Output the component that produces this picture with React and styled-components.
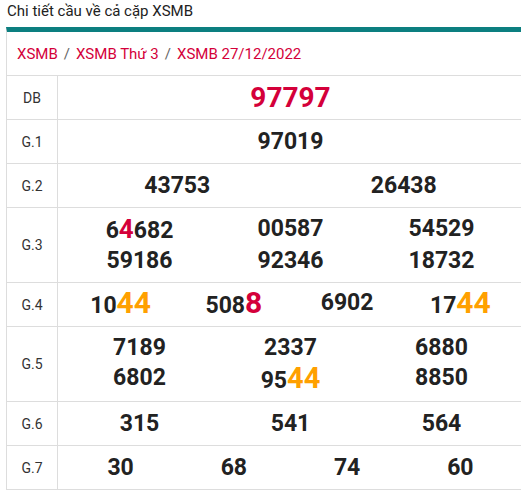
import React from "react";
import styled, { createGlobalStyle } from "styled-components";

const GlobalStyle = createGlobalStyle`
  body {
    margin: 0;
    background: #fff;
    font-family: Roboto, "Liberation Sans", Arial, sans-serif;
    color: #222;
  }
`;

const RED = "#d4003a";
const ORANGE = "#ffa000";

// prize rows: label, column count, numbers; a number is a string or a list of parts
const rows = [
  { label: "DB", cols: 1, big: true, nums: [[{ t: "97797", c: RED }]] },
  { label: "G.1", cols: 1, nums: ["97019"] },
  { label: "G.2", cols: 2, nums: ["43753", "26438"] },
  {
    label: "G.3",
    cols: 3,
    tall: true,
    nums: [
      ["6", { t: "4", c: RED, s: 26 }, "682"],
      "00587",
      "54529",
      "59186",
      "92346",
      "18732",
    ],
  },
  {
    label: "G.4",
    cols: 4,
    nums: [
      ["10", { t: "44", c: ORANGE, s: 30 }],
      ["508", { t: "8", c: RED, s: 30 }],
      "6902",
      ["17", { t: "44", c: ORANGE, s: 30 }],
    ],
  },
  {
    label: "G.5",
    cols: 3,
    tall: true,
    nums: [
      "7189",
      "2337",
      "6880",
      "6802",
      ["95", { t: "44", c: ORANGE, s: 29 }],
      "8850",
    ],
  },
  { label: "G.6", cols: 3, nums: ["315", "541", "564"] },
  { label: "G.7", cols: 4, nums: ["30", "68", "74", "60"] },
];

function Number({ value, big }) {
  const parts = Array.isArray(value) ? value : [value];
  return (
    <Num $big={big}>
      {parts.map((p, i) =>
        typeof p === "string" ? (
          <span key={i}>{p}</span>
        ) : (
          <Hi key={i} $color={p.c} $size={p.s}>
            {p.t}
          </Hi>
        )
      )}
    </Num>
  );
}

function App() {
  return (
    <>
      <GlobalStyle />
      <Title>Chi tiết cầu về cả cặp XSMB</Title>
      <Box>
        <Breadcrumb>
          <Crumb>XSMB</Crumb>
          <Sep>/</Sep>
          <Crumb>XSMB Thứ 3</Crumb>
          <Sep>/</Sep>
          <Crumb>XSMB 27/12/2022</Crumb>
        </Breadcrumb>
        {rows.map((row) => (
          <Row key={row.label} $tall={row.tall}>
            <Label>{row.label}</Label>
            <Values $cols={row.cols}>
              {row.nums.map((n, i) => (
                <Number key={i} value={n} big={row.big} />
              ))}
            </Values>
          </Row>
        ))}
      </Box>
    </>
  );
}

export default App;

const Title = styled.h1`
  margin: 0;
  padding: 1px 0 0 7px;
  height: 26px;
  font-size: 15px;
  font-weight: 400;
  line-height: 20px;
  color: #222;
`;

const Box = styled.div`
  margin-left: 6px;
  width: 516px;
  border-top: 5px solid #0c7f80;
  border-left: 1px solid #ddd;
`;

const Breadcrumb = styled.div`
  display: flex;
  align-items: center;
  gap: 6px;
  height: 43px;
  padding-left: 10px;
  border-bottom: 1px solid #ddd;
  font-size: 15px;
`;

const Crumb = styled.span`
  color: ${RED};
`;

const Sep = styled.span`
  color: #666;
`;

const Row = styled.div`
  display: grid;
  grid-template-columns: 51px 1fr;
  height: ${(p) => (p.$tall ? "74px" : "43px")};
  border-bottom: 1px solid #ddd;
`;

const Label = styled.div`
  display: flex;
  align-items: center;
  justify-content: center;
  border-right: 1px solid #ddd;
  font-size: 14px;
  color: #333;
`;

const Values = styled.div`
  display: grid;
  grid-template-columns: repeat(${(p) => p.$cols}, 1fr);
  align-content: center;
  padding: 0 6px;
`;

const Num = styled.div`
  text-align: center;
  font-weight: 700;
  font-size: ${(p) => (p.$big ? "28px" : "23px")};
  line-height: 30px;
  color: #222;
`;

const Hi = styled.span`
  color: ${(p) => p.$color};
  font-size: ${(p) => (p.$size ? `${p.$size}px` : "inherit")};
`;
